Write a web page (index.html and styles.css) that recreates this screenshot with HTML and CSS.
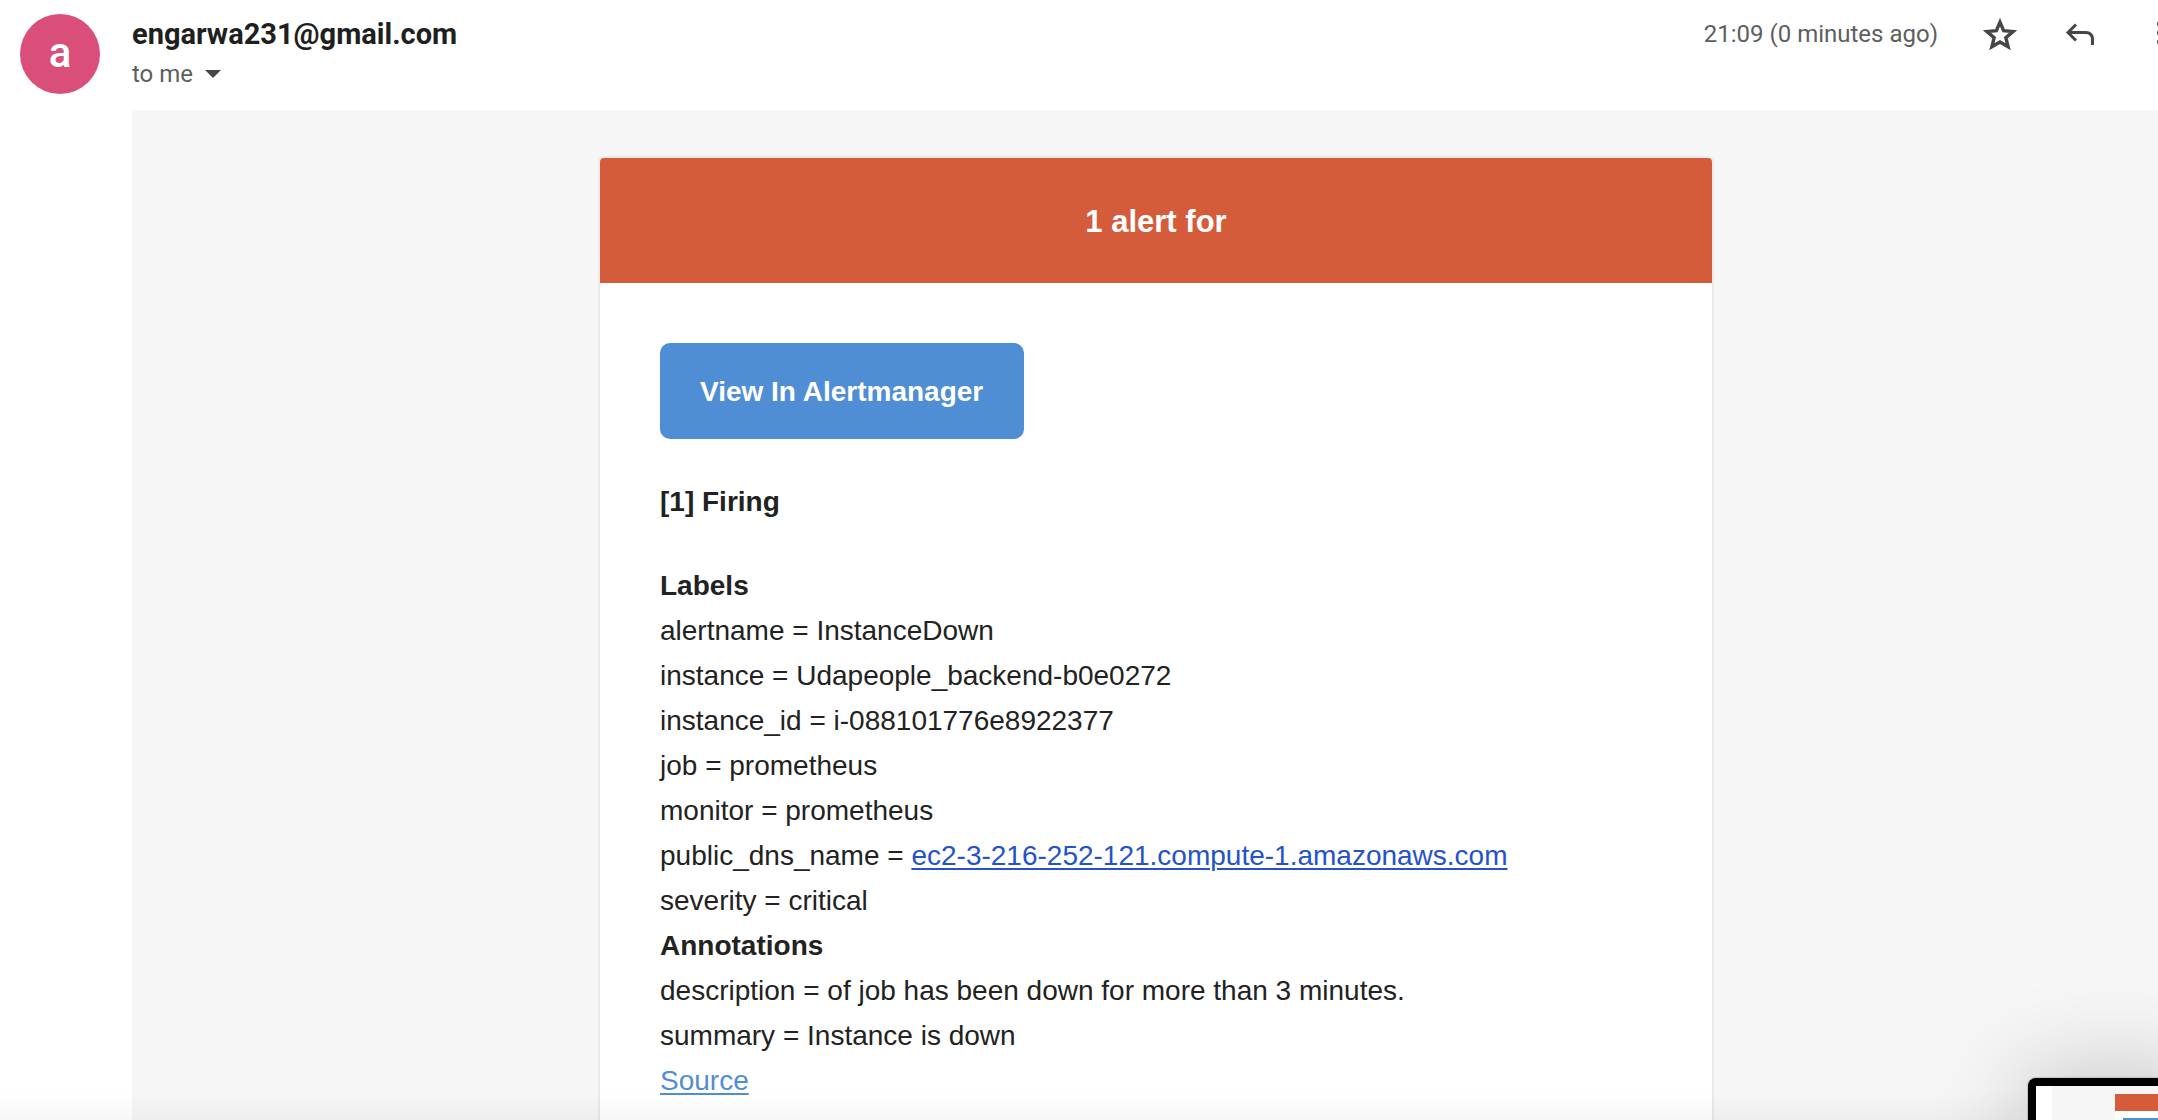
FILE: index.html
```
<!DOCTYPE html>
<html lang="en">
<head>
<meta charset="utf-8">
<title>1 alert for</title>
<link rel="stylesheet" href="styles.css">
</head>
<body>
<main class="message">
  <div class="avatar" aria-hidden="true">a</div>
  <header class="message-header">
    <div class="sender">
      <h1 class="sender-name">engarwa231@gmail.com</h1>
      <button class="recipient" type="button">to me
        <svg width="16" height="8" viewBox="0 0 16 8" aria-hidden="true"><path d="M0 0h16L8 8z" fill="currentColor"/></svg>
      </button>
    </div>
    <time class="sent">21:09 (0 minutes ago)</time>
    <div class="actions">
      <button class="icon-button" type="button" aria-label="Star">
        <svg width="36" height="36" viewBox="2 2 32 32" fill="none" stroke="currentColor" stroke-width="3"><path d="M18 6.500L21.200 14.200 29.600 14.900 23.200 20.400 25.200 28.500 18 24.200 10.800 28.500 12.800 20.400 6.400 14.900 14.800 14.200z"/></svg>
      </button>
      <button class="icon-button" type="button" aria-label="Reply">
        <svg width="36" height="36" viewBox="0 0 36 36" fill="none" stroke="currentColor" stroke-width="3"><path d="M13 7.500l-8 8 8 8M5 15.500h17.500q7 0 7 7v5.500"/></svg>
      </button>
      <button class="icon-button" type="button" aria-label="More">
        <svg width="36" height="36" viewBox="0 0 36 36" fill="currentColor"><circle cx="16" cy="7" r="3"/><circle cx="16" cy="16" r="3"/><circle cx="16" cy="25" r="3"/></svg>
      </button>
    </div>
  </header>
  <section class="message-body">
    <article class="card">
      <h2 class="card-title">1 alert for</h2>
      <div class="card-content">
        <a class="view-button" href="#alertmanager">View In Alertmanager</a>
        <h3 class="status">[1] Firing</h3>
        <h4>Labels</h4>
        <p>alertname = InstanceDown</p>
        <p>instance = Udapeople_backend-b0e0272</p>
        <p>instance_id = i-088101776e8922377</p>
        <p>job = prometheus</p>
        <p>monitor = prometheus</p>
        <p>public_dns_name = <a class="dns-link" href="#instance">ec2-3-216-252-121.compute-1.amazonaws.com</a></p>
        <p>severity = critical</p>
        <h4>Annotations</h4>
        <p>description = of job has been down for more than 3 minutes.</p>
        <p>summary = Instance is down</p>
        <p><a class="source-link" href="#source">Source</a></p>
      </div>
    </article>
  </section>
</main>
<div class="bottom-shade" aria-hidden="true"></div>
<aside class="preview" aria-hidden="true">
  <div class="preview-page">
    <div class="preview-card"><div class="preview-title"></div><div class="preview-button"></div></div>
  </div>
</aside>
</body>
</html>
```
FILE: styles.css
```
* { box-sizing: border-box; }

body {
  margin: 0;
  overflow-x: hidden;
  background: #fff;
  color: #222;
  font-family: "Liberation Sans", Arial, Helvetica, sans-serif;
  font-size: 28px;
  line-height: 45px;
}

h1, h2, h3, h4, p { margin: 0; font-size: inherit; }
button { border: 0; padding: 0; background: none; font: inherit; color: inherit; }

/* The message runs a little past the right edge of the window. */
.message {
  display: grid;
  grid-template-columns: 132px 1fr;
  grid-template-rows: 110px 1fr;
  min-height: 100vh;
  margin-right: -22px;
}

.avatar {
  width: 80px;
  height: 80px;
  margin: 14px 0 0 20px;
  border-radius: 50%;
  background: #da4f7a;
  color: #fff;
  font: 500 42px/78px Roboto, sans-serif;
  text-align: center;
}

.message-header {
  display: flex;
  align-items: flex-start;
  padding-top: 14px;
  color: #5e5e5e;
  font-family: Roboto, sans-serif;
  font-size: 24px;
  line-height: 40px;
}

.sender { flex: 1; }
.sender-name { color: #1f1f1f; font-size: 29px; line-height: 40px; font-weight: 700; }
.recipient { display: flex; align-items: center; gap: 12px; }
.recipient svg { color: #444746; }
.actions { display: flex; gap: 45px; margin-left: 44px; color: #444746; }
.icon-button { display: flex; padding-top: 3px; }

.message-body {
  grid-column: 2;
  padding: 46px 20px 0;
  background: #f6f6f6;
}

.card {
  max-width: 1116px;
  height: 100%;
  margin: 0 auto;
  border: 2px solid #e9e9e9;
  border-bottom: 0;
  border-radius: 6px 6px 0 0;
  background: #fff;
  overflow: hidden;
}

.card-title {
  padding: 41px 40px 39px;
  background: #d55c3a;
  color: #fff;
  font-size: 31px;
  font-weight: 700;
  text-align: center;
}

.card-content { padding: 60px 60px 0; }

.view-button {
  display: inline-block;
  padding: 27px 41px 25px 40px;
  border-radius: 10px;
  background: #4f8dd5;
  color: #fff;
  font-weight: 700;
  line-height: 44px;
  text-decoration: none;
}

.status { margin: 40px 0 39px; }
.dns-link { color: #2452c8; }
.source-link { color: #4f8dd5; }
a { text-underline-offset: 3px; text-decoration-thickness: 2px; }

.bottom-shade {
  position: fixed;
  inset: auto 0 0;
  height: 28px;
  background: linear-gradient(rgba(0, 0, 0, 0), rgba(0, 0, 0, 0.03));
  pointer-events: none;
}

/* Floating capture thumbnail in the corner of the screen. */
.preview {
  position: fixed;
  right: 0;
  bottom: 0;
  width: 130px;
  height: 42px;
  padding: 8px 0 0 8px;
  border-radius: 8px 0 0 0;
  background: #000;
  box-shadow: 0 0 2px rgba(0, 0, 0, 0.5), 20px 20px 90px 30px rgba(0, 0, 0, 0.18);
}

.preview-page { height: 100%; padding: 8px 0 0 79px; background: linear-gradient(to right, #fff 16px, #f6f6f6 16px); }
.preview-card { background: #fff; height: 100%; }
.preview-title { height: 17px; background: #d55c3a; }
.preview-button { height: 2px; margin: 7px 0 0 8px; background: #4f8dd5; }
```
